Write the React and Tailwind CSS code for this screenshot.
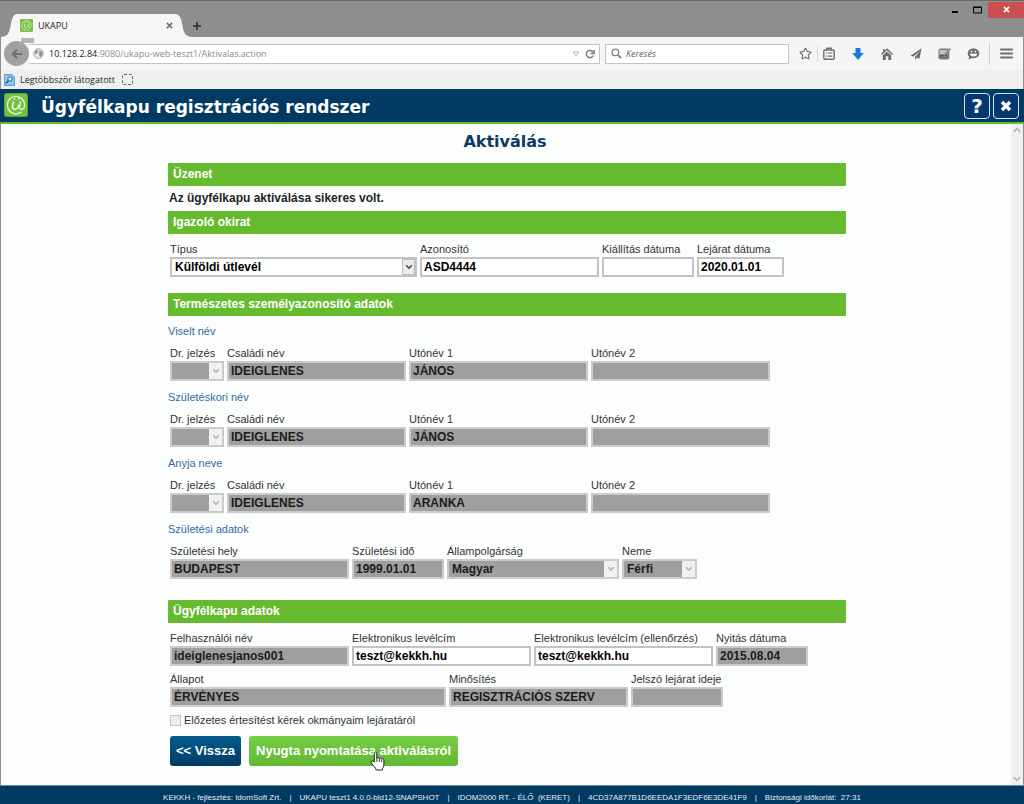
import React, { useId } from "react";
import { FaRegStar } from "react-icons/fa";

const inputBase =
  "h-5 w-full rounded-none border-2 px-[2px] text-[12px] leading-4 font-bold outline-none";
const openInput = "border-[#c3c3c3] bg-white text-black";
const lockedInput = "border-[#cbcbcb] bg-[#9f9f9f] text-[#1c1c1c]";

function Field({ label, value = "", width, locked = false }) {
  const id = useId();
  return (
    <div className={`flex flex-col ${width}`}>
      <label htmlFor={id} className="h-4 text-[11px] leading-4 whitespace-nowrap">
        {label}
      </label>
      <input
        id={id}
        type="text"
        defaultValue={value}
        disabled={locked}
        className={`${inputBase} ${locked ? lockedInput : openInput}`}
      />
    </div>
  );
}

function Choice({ label, value = "", width, locked = false }) {
  const id = useId();
  return (
    <div className={`flex flex-col ${width}`}>
      <label htmlFor={id} className="h-4 text-[11px] leading-4 whitespace-nowrap">
        {label}
      </label>
      <div className="relative">
        <select
          id={id}
          disabled={locked}
          className={`${inputBase} block appearance-none pl-[3px] opacity-100 ${locked ? lockedInput : openInput}`}
        >
          <option>{value}</option>
        </select>
        <span
          className={`pointer-events-none absolute inset-y-[2px] right-[2px] flex w-[13px] items-center justify-center ${
            locked ? "bg-[#f0f0f0] text-[#b0b0b0]" : "border border-[#bdbdbd] bg-[#ececec] text-[#444]"
          }`}
        >
          <svg viewBox="0 0 8 6" className="h-[6px] w-2" fill="none" stroke="currentColor" strokeWidth="1.4">
            <path d="M1.2 1.2 4 4.2 6.8 1.2" />
          </svg>
        </span>
      </div>
    </div>
  );
}

function Bar({ children }) {
  return (
    <h2 className="h-[23px] rounded-[1px] bg-[#65ba2e] px-[5px] text-[12px] leading-[23px] font-bold text-white">
      {children}
    </h2>
  );
}

function Row({ children }) {
  return <div className="flex gap-[3px] pl-[2px]">{children}</div>;
}

function Group({ title, children }) {
  return (
    <section className="flex flex-col gap-[6px]">
      <h3 className="h-4 text-[11px] leading-4 text-[#336b9f]">{title}</h3>
      <Row>{children}</Row>
    </section>
  );
}

function NameGroup({ title, family, given }) {
  return (
    <Group title={title}>
      <Choice label="Dr. jelzés" width="w-[54px]" locked />
      <Field label="Családi név" value={family} width="w-[179px]" locked />
      <Field label="Utónév 1" value={given} width="w-[179px]" locked />
      <Field label="Utónév 2" width="w-[179px]" locked />
    </Group>
  );
}

function AtLogo({ className }) {
  return (
    <svg viewBox="0 0 24 24" className={className} aria-hidden="true">
      <rect x="0.5" y="0.5" width="23" height="23" rx="2" fill="#76c043" stroke="#5da52f" />
      <g fill="none" stroke="#eaf8dc" strokeLinecap="round">
        <path d="M17 19.200A8.700 8.700 0 1 1 20.600 11.500c0 3-1.200 4.800-3 4.800s-2.200-1.300-1.900-3.100l.9-4.700" strokeWidth="1.200" />
        <path d="M9.300 8.900 8.500 13.300c-.3 1.900.4 2.900 1.800 2.900 2.600 0 4.300-1.700 4.900-4.200" strokeWidth="1.500" />
        <path d="M10.500 5.900h.1M14.900 5.900h.1" strokeWidth="1.600" />
      </g>
    </svg>
  );
}

function TitleBar() {
  return (
    <div className="flex h-[37px] items-end border-t border-[#6b6b6b] bg-[#8e8e8e]">
      <svg viewBox="0 0 18 23" className="h-[23px] w-[18px]" aria-hidden="true">
        <path d="M0 23C8 23 9 19 10.500 12 12 4 13 0 18 0v23z" fill="#f6f6f6" />
      </svg>
      <div className="flex h-[23px] w-[157px] items-center gap-[5px] bg-[#f6f6f6] pl-[2px] text-[9px] text-[#222]">
        <AtLogo className="h-[13px] w-[13px]" />
        <span className="flex-1">UKAPU</span>
        <button type="button" aria-label="Lap bezárása" className="flex h-3 w-3 items-center justify-center text-[#6f6f6f]">
          <svg viewBox="0 0 8 8" className="h-[7px] w-[7px]" stroke="currentColor" strokeWidth="1.8">
            <path d="M1 1l6 6M7 1 1 7" />
          </svg>
        </button>
      </div>
      <svg viewBox="0 0 18 23" className="h-[23px] w-[18px]" aria-hidden="true">
        <path d="M18 23C10 23 9 19 7.500 12 6 4 5 0 0 0v23z" fill="#f6f6f6" />
      </svg>
      <button type="button" aria-label="Új lap" className="mb-[6px] ml-[-1px] text-[#2d2d2d]">
        <svg viewBox="0 0 10 10" className="h-[10px] w-[10px]" stroke="currentColor" strokeWidth="1.5">
          <path d="M5 1v8M1 5h8" />
        </svg>
      </button>
      <div className="ml-auto flex items-center self-start text-black">
        <button type="button" aria-label="Kis méret" className="flex h-[17px] w-[22px] items-center justify-center">
          <svg viewBox="0 0 8 8" className="h-2 w-2" stroke="currentColor" strokeWidth="2">
            <path d="M1 6h6" />
          </svg>
        </button>
        <button type="button" aria-label="Teljes méret" className="flex h-[17px] w-[22px] items-center justify-center">
          <svg viewBox="0 0 9 8" className="h-2 w-[9px]" fill="none" stroke="currentColor">
            <path d="M.5 1.500h8v5.500h-8z" />
            <path d="M0 1h9" />
          </svg>
        </button>
        <button type="button" aria-label="Bezárás" className="flex h-4 w-9 items-center justify-center bg-[#c9504f] text-white">
          <svg viewBox="0 0 8 8" className="h-[7px] w-[7px]" stroke="currentColor" strokeWidth="1.8">
            <path d="M1 1l6 6M7 1 1 7" />
          </svg>
        </button>
      </div>
    </div>
  );
}

function ToolButton({ label, children }) {
  return (
    <button type="button" aria-label={label} className="flex h-5 w-[29px] items-center justify-center">
      {children}
    </button>
  );
}

function NavBar() {
  return (
    <div className="relative flex h-[33px] items-center border-x border-[#8e8e8e] bg-[#f5f5f5] pl-[3px] text-[#6e6e6e]">
      <span className="absolute top-[1px] left-5 h-[5px] w-[13px] bg-[#b3b3b8]" />
      <button
        type="button"
        aria-label="Vissza"
        className="z-10 flex h-[25px] w-[25px] items-center justify-center rounded-full bg-[#a1a1a3] text-[#707074]"
      >
        <svg viewBox="0 0 14 12" className="h-3 w-3" fill="none" stroke="currentColor" strokeWidth="2.6">
          <path d="M13 6H2.500M7 1 2.200 6 7 11" />
        </svg>
      </button>
      <div className="flex h-5 flex-1 items-center border border-l-0 border-[#bfc4ca] bg-white pl-1">
        <svg viewBox="0 0 12 12" className="h-[11px] w-[11px]" aria-hidden="true">
          <circle cx="6" cy="6" r="5.300" fill="#e6e6e6" stroke="#a3a3a3" />
          <path d="M1.500 5 4 1.800l2 1.500L4.500 6l-2 1zM7 2.500l3.500 1.500v3L8.500 10 6.500 7.500z" fill="#969696" />
        </svg>
        <p className="flex-1 pl-[5px] text-[9px] text-[#8a8a8a]">
          <span className="text-[#222]">10.128.2.84</span>:9080/ukapu-web-teszt1/Aktivalas.action
        </p>
        <svg viewBox="0 0 8 6" className="mr-[5px] h-[6px] w-2" fill="none" stroke="#b5b5b5" aria-hidden="true">
          <path d="M1 1h6L4 5z" />
        </svg>
        <button type="button" aria-label="Frissítés" className="mr-1 text-[#777f88]">
          <svg viewBox="0 0 10 10" className="h-[10px] w-[10px]" fill="none" stroke="currentColor" strokeWidth="1.5">
            <path d="M8.200 6.500A3.600 3.600 0 1 1 7.500 2.500L8.500 3.800" />
            <path d="M9.200.8v3.700H5.600" />
          </svg>
        </button>
      </div>
      <label className="ml-[5px] flex h-5 w-[184px] items-center gap-1 border border-[#bfc4ca] bg-white pl-[5px]">
        <svg viewBox="0 0 12 12" className="h-[11px] w-[11px]" fill="none" stroke="#7c7c7c" aria-hidden="true">
          <circle cx="4.800" cy="4.800" r="3.600" strokeWidth="1.4" />
          <path d="M7.500 7.500 11 11" strokeWidth="1.900" />
        </svg>
        <input
          type="search"
          placeholder="Keresés"
          aria-label="Keresés"
          className="min-w-0 flex-1 bg-transparent text-[9px] italic outline-none placeholder:text-[#666]"
        />
      </label>
      <button type="button" aria-label="Könyvjelző hozzáadása" className="flex w-[23px] justify-end">
        <FaRegStar className="h-[13px] w-[13px]" />
      </button>
      <div className="ml-[5px] h-4 w-px bg-[#dadada]" />
      <div className="-ml-1 flex shrink-0">
        <ToolButton label="Könyvjelzők">
          <svg viewBox="0 0 12 13" className="h-[13px] w-3" fill="none" stroke="currentColor" strokeWidth="1.4">
            <rect x=".8" y="3" width="10.400" height="9.200" rx="1" />
            <path d="M3.800 3V1.300h4.400V3" />
            <path d="M2.800 6h1M4.800 6h4.500M2.800 9.200h1M4.800 9.200h4.500" strokeWidth="1.200" />
          </svg>
        </ToolButton>
        <ToolButton label="Letöltések">
          <svg viewBox="0 0 12 12" className="h-3 w-3" fill="#1a77dc">
            <path d="M3.500 0h5v5h3.300L6 12 .2 5h3.300z" />
          </svg>
        </ToolButton>
        <ToolButton label="Kezdőlap">
          <svg viewBox="0 0 12 12" className="h-3 w-3" fill="currentColor">
            <path d="M6 .3 12 6l-.9 1L6 2.300.9 7 0 6l2-1.900V1.200h1.700v1.300z" />
            <path d="M6 3.400 10.200 7.200V12H7.300V8.300H4.700V12H1.800V7.200z" />
          </svg>
        </ToolButton>
        <ToolButton label="Megosztás">
          <svg viewBox="0 0 12 12" className="h-3 w-3" fill="currentColor">
            <path d="M11.500.3.500 7.800l3 .8L10 2.800 5 9v3l1.800-2.200 2.700 1z" />
          </svg>
        </ToolButton>
        <ToolButton label="Jegyzet">
          <svg viewBox="0 0 13 13" className="h-[13px] w-[13px]">
            <rect x=".5" y="1.500" width="10.800" height="11" rx="2" fill="#777" />
            <path d="M1.500 3h8v4.500h-8z" fill="#c2c2c2" />
            <path d="M2 9.500c2-2.500 4 0 7-2" fill="none" stroke="#4a4a4a" />
            <path d="M12 1.200 6 7.500l-1 2 2-1L12.700 2z" fill="#c89a70" stroke="#6a5a50" strokeWidth=".4" />
          </svg>
        </ToolButton>
        <ToolButton label="Hello">
          <svg viewBox="0 0 14 13" className="h-3 w-[13px]">
            <path d="M7 .5c3.600 0 6.300 2.300 6.300 5.300S10.600 11 7 11c-.8 0-1.500 0-2-.3L1.500 12.500l.8-3C1.200 8.600.7 7.300.7 5.800.7 2.800 3.400.5 7 .5z" fill="currentColor" />
            <path d="M3 6.300h8C10.700 8.300 9.300 9.300 7 9.300S3.300 8.300 3 6.300z" fill="#fff" />
            <path d="M4.900 3v1.800M9.100 3v1.800" stroke="#fff" strokeWidth="1.500" />
          </svg>
        </ToolButton>
      </div>
      <div className="ml-px h-[22px] w-px bg-[#cfcfcf]" />
      <button type="button" aria-label="Menü" className="flex w-[33px] shrink-0 items-center justify-center">
        <svg viewBox="0 0 13 11" className="h-[11px] w-[13px]" stroke="currentColor" strokeWidth="2" strokeLinecap="round">
          <path d="M1 1.500h11M1 5.500h11M1 9.500h11" />
        </svg>
      </button>
    </div>
  );
}

function BookmarksBar() {
  return (
    <div className="flex h-[19px] items-center border-x border-[#8e8e8e] bg-[#efefef] pl-[3px] text-[9px] text-[#1f1f1f]">
      <svg viewBox="0 0 11 12" className="h-3 w-[11px]" aria-hidden="true">
        <path d="M.5.500h7.500l2.500 2.500v8.500H.5z" fill="#8fc7ef" stroke="#5c9fcf" />
        <circle cx="6" cy="5" r="2.200" fill="#d9effc" stroke="#24609a" />
        <path d="M4.500 6.500 2 9.500" stroke="#24609a" strokeWidth="1.5" />
      </svg>
      <a href="#latogatott" className="ml-[5px]">
        Legtöbbször látogatott
      </a>
      <span className="ml-[7px] h-[11px] w-[11px] rounded-[2px] border border-dashed border-[#666]" />
    </div>
  );
}

function HeaderButton({ label, children }) {
  return (
    <button
      type="button"
      aria-label={label}
      className="flex h-[26px] w-[26px] items-center justify-center rounded-[4px] border border-[#d3e4f5] bg-[#06386f] text-white"
    >
      {children}
    </button>
  );
}

function AppHeader() {
  return (
    <header className="flex h-[35px] items-center border-b-2 border-[#65ba2e] bg-[#013b64] pr-[5px] pl-1">
      <AtLogo className="mb-[2px] h-6 w-6" />
      <span className="ml-[13px] pt-[3px] font-['DejaVu_Sans',sans-serif] text-[17px] leading-5 font-bold text-white">
        Ügyfélkapu regisztrációs rendszer
      </span>
      <div className="ml-auto flex gap-[3px]">
        <HeaderButton label="Súgó">
          <span className="font-['DejaVu_Sans',sans-serif] text-[20px] leading-5 font-bold">?</span>
        </HeaderButton>
        <HeaderButton label="Kilépés">
          <svg viewBox="0 0 12 12" className="h-3 w-3" stroke="currentColor" strokeWidth="3.400">
            <path d="M2 2l8 8M10 2l-8 8" />
          </svg>
        </HeaderButton>
      </div>
    </header>
  );
}

function ScrollTrack() {
  return (
    <div className="flex w-[13px] shrink-0 flex-col items-center justify-between border-r border-[#8e8e8e] bg-[#f0f0f0] py-[3px] text-[#adadad]">
      <svg viewBox="0 0 8 6" className="h-[6px] w-2" fill="none" stroke="currentColor" strokeWidth="1.5">
        <path d="M1 4.800 4 1.500 7 4.800" />
      </svg>
      <svg viewBox="0 0 8 6" className="h-[6px] w-2" fill="none" stroke="currentColor" strokeWidth="1.5">
        <path d="M1 1.200 4 4.500 7 1.200" />
      </svg>
    </div>
  );
}

function HandPointer() {
  return (
    <svg viewBox="0 0 16 21" className="pointer-events-none absolute top-[15px] left-[121px] h-[21px] w-4" aria-hidden="true">
      <path
        d="M4.300 11V2.400c0-1.800 2.500-1.800 2.500 0v5c.3-1.300 2.300-1.200 2.500.3.400-1.100 2.200-.9 2.400.5.500-.9 2.200-.6 2.200 1v4.600c0 2-1.400 2.700-1.600 5.200H6.200C5.700 16.500 3.300 14.500 1.300 12c-1-1.600.8-2.700 1.900-1.800z"
        fill="#fff"
        stroke="#222"
        strokeWidth="1"
      />
      <path d="M6.800 7.500v3.300M9.300 8v3M11.700 8.500v2.700" stroke="#222" strokeWidth=".9" />
    </svg>
  );
}

export default function App() {
  return (
    <div className="flex min-h-screen flex-col bg-[#fcfefd] font-['Liberation_Sans',Arial,sans-serif]">
      <div className="font-['Open_Sans',sans-serif]">
        <TitleBar />
        <NavBar />
        <BookmarksBar />
      </div>
      <AppHeader />
      <div className="flex flex-1 border-l border-[#8e8e8e]">
        <main className="flex-1 pl-[2px]">
          <form className="mx-auto flex w-[678px] flex-col text-[#333]" onSubmit={(e) => e.preventDefault()}>
            <h1 className="h-[39px] pt-2 pr-1 text-center font-['DejaVu_Sans',sans-serif] text-[16px] leading-5 font-bold text-[#0b3a66]">
              Aktiválás
            </h1>

            <Bar>Üzenet</Bar>
            <p className="h-[25px] pl-[1px] text-[12px] leading-[25px] font-bold text-[#1f1f1f]">
              Az ügyfélkapu aktiválása sikeres volt.
            </p>

            <Bar>Igazoló okirat</Bar>
            <div className="pt-[7px] pb-4">
              <Row>
                <Choice label="Típus" value="Külföldi útlevél" width="w-[247px]" />
                <Field label="Azonosító" value="ASD4444" width="w-[179px]" />
                <Field label="Kiállítás dátuma" width="w-[92px]" />
                <Field label="Lejárat dátuma" value="2020.01.01" width="w-[87px]" />
              </Row>
            </div>

            <Bar>Természetes személyazonosító adatok</Bar>
            <div className="flex flex-col gap-2 pt-[7px] pb-[21px]">
              <NameGroup title="Viselt név" family="IDEIGLENES" given="JÁNOS" />
              <NameGroup title="Születéskori név" family="IDEIGLENES" given="JÁNOS" />
              <NameGroup title="Anyja neve" family="IDEIGLENES" given="ARANKA" />
              <Group title="Születési adatok">
                <Field label="Születési hely" value="BUDAPEST" width="w-[179px]" locked />
                <Field label="Születési idő" value="1999.01.01" width="w-[92px]" locked />
                <Choice label="Állampolgárság" value="Magyar" width="w-[172px]" locked />
                <Choice label="Neme" value="Férfi" width="w-[75px]" locked />
              </Group>
            </div>

            <Bar>Ügyfélkapu adatok</Bar>
            <div className="flex flex-col gap-[5px] pt-[7px]">
              <Row>
                <Field label="Felhasználói név" value="ideiglenesjanos001" width="w-[179px]" locked />
                <Field label="Elektronikus levélcím" value="teszt@kekkh.hu" width="w-[179px]" />
                <Field label="Elektronikus levélcím (ellenőrzés)" value="teszt@kekkh.hu" width="w-[179px]" />
                <Field label="Nyitás dátuma" value="2015.08.04" width="w-[92px]" locked />
              </Row>
              <Row>
                <Field label="Állapot" value="ÉRVÉNYES" width="w-[276px]" locked />
                <Field label="Minősítés" value="REGISZTRÁCIÓS SZERV" width="w-[179px]" locked />
                <Field label="Jelszó lejárat ideje" width="w-[92px]" locked />
              </Row>
              <label className="flex h-4 items-center gap-[3px] pl-[2px] text-[11px] leading-4">
                <input
                  type="checkbox"
                  disabled
                  className="h-[11px] w-[11px] appearance-none border border-[#c4c4c4] bg-[#ebebeb]"
                />
                Előzetes értesítést kérek okmányaim lejáratáról
              </label>
            </div>

            <div className="flex gap-2 pt-2 pl-[2px]">
              <button
                type="button"
                className="h-[30px] rounded-[3px] bg-linear-to-b from-[#045c8d] to-[#013b64] px-[6px] text-[13px] font-bold text-white"
              >
                &lt;&lt; Vissza
              </button>
              <div className="relative">
                <button
                  type="button"
                  className="h-[30px] rounded-[3px] bg-linear-to-b from-[#76cc43] to-[#62b931] px-[7px] text-[13px] font-bold text-white"
                >
                  Nyugta nyomtatása aktiválásról
                </button>
                <HandPointer />
              </div>
            </div>
          </form>
        </main>
        <ScrollTrack />
      </div>
      <footer className="flex h-[19px] items-center justify-center gap-2 border-t border-[#6d8ba3] bg-[#013b64] pt-[5px] text-[8px] leading-3 whitespace-pre text-[#e3edf5]">
        <span>KEKKH - fejlesztés: IdomSoft Zrt.</span>
        <span>|</span>
        <span>UKAPU teszt1 4.0.0-bld12-SNAPSHOT</span>
        <span>|</span>
        <span>IDOM2000 RT. - ÉLŐ  (KERET)</span>
        <span>|</span>
        <span>4CD37A877B1D6EEDA1F3EDF6E3DE41F9</span>
        <span>|</span>
        <span>Biztonsági időkorlát:  27:31</span>
      </footer>
    </div>
  );
}
